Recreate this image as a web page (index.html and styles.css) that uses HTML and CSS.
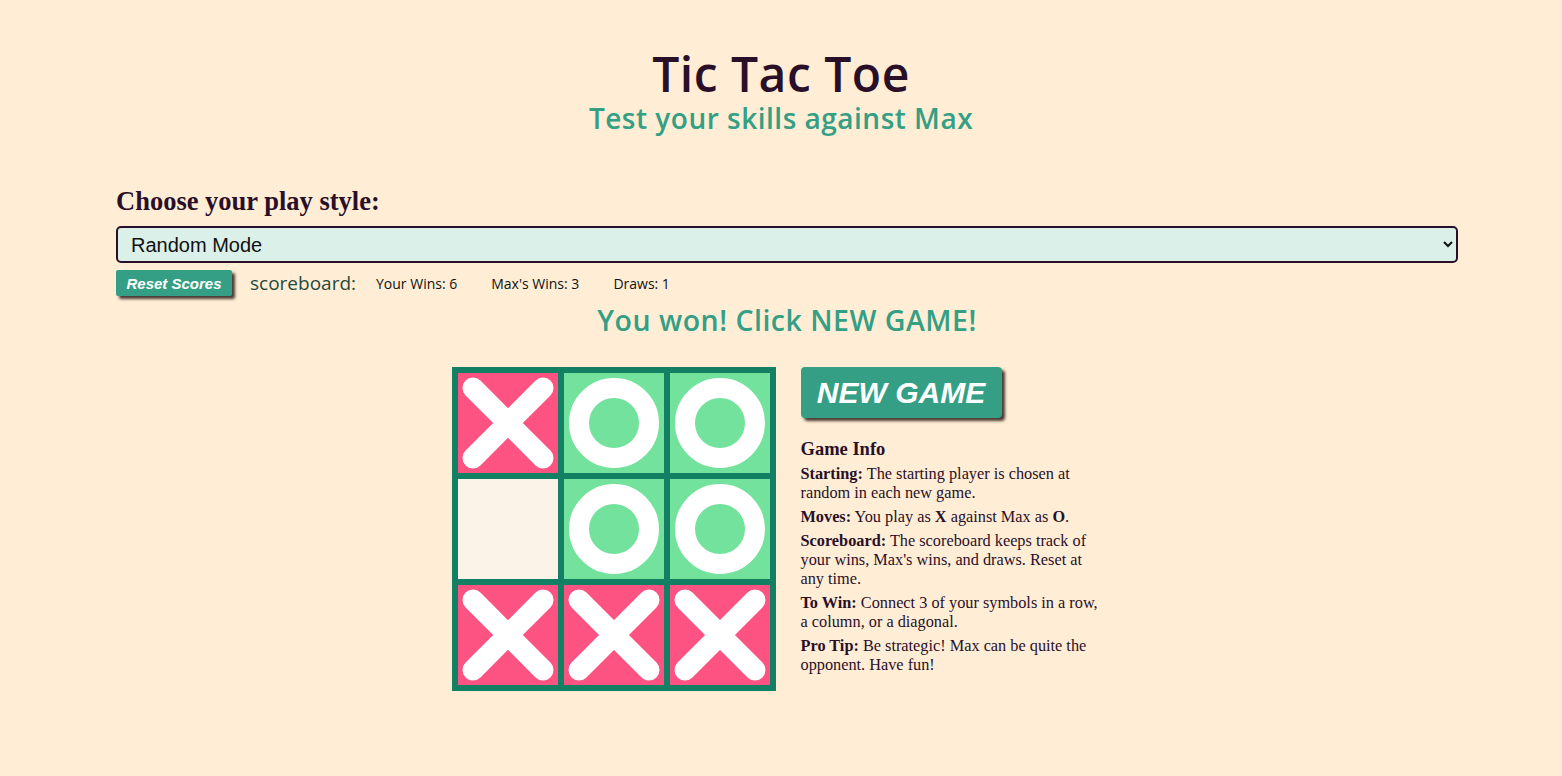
FILE: index.html
```html
<!DOCTYPE html>
<html>
<head>
<meta charset="utf-8">
<link rel="stylesheet" href="styles.css">
</head>
<body>
<header class="hero">
  <h1 class="title">Tic Tac Toe</h1>
  <h2 class="subtitle">Test your skills against Max</h2>
</header>
<main class="main">
  <label class="style-label" for="mode">Choose your play style:</label>
  <select class="mode-select" id="mode">
    <option>Random Mode</option>
  </select>
  <div class="score-row">
    <button class="reset-btn">Reset Scores</button>
    <span class="score-title">scoreboard:</span>
    <span class="score">Your Wins: 6</span>
    <span class="score">Max's Wins: 3</span>
    <span class="score">Draws: 1</span>
  </div>
  <p class="status">You won! Click NEW GAME!</p>
  <div class="game">
    <div class="board">
      <div class="cell cell-x"><svg viewBox="0 0 100 100"><path d="M15 15 L85 85 M85 15 L15 85"/></svg></div>
      <div class="cell cell-o"><svg viewBox="0 0 100 100"><circle cx="50" cy="50" r="35"/></svg></div>
      <div class="cell cell-o"><svg viewBox="0 0 100 100"><circle cx="50" cy="50" r="35"/></svg></div>
      <div class="cell cell-empty"></div>
      <div class="cell cell-o"><svg viewBox="0 0 100 100"><circle cx="50" cy="50" r="35"/></svg></div>
      <div class="cell cell-o"><svg viewBox="0 0 100 100"><circle cx="50" cy="50" r="35"/></svg></div>
      <div class="cell cell-x"><svg viewBox="0 0 100 100"><path d="M15 15 L85 85 M85 15 L15 85"/></svg></div>
      <div class="cell cell-x"><svg viewBox="0 0 100 100"><path d="M15 15 L85 85 M85 15 L15 85"/></svg></div>
      <div class="cell cell-x"><svg viewBox="0 0 100 100"><path d="M15 15 L85 85 M85 15 L15 85"/></svg></div>
    </div>
    <aside class="side">
      <button class="new-btn">NEW GAME</button>
      <h3 class="info-title">Game Info</h3>
      <p class="info"><b>Starting:</b> The starting player is chosen at random in each new game.</p>
      <p class="info"><b>Moves:</b> You play as <b>X</b> against Max as <b>O</b>.</p>
      <p class="info"><b>Scoreboard:</b> The scoreboard keeps track of your wins, Max's wins, and draws. Reset at any time.</p>
      <p class="info"><b>To Win:</b> Connect 3 of your symbols in a row, a column, or a diagonal.</p>
      <p class="info"><b>Pro Tip:</b> Be strategic! Max can be quite the opponent. Have fun!</p>
    </aside>
  </div>
</main>
</body>
</html>
```

FILE: styles.css
```css
html, body {
  margin: 0;
  padding: 0;
  background: #ffeed5;
}
body {
  font-family: "Liberation Serif", serif;
  color: #2a0f28;
}
.hero {
  text-align: center;
  padding-top: 46px;
}
.title {
  margin: 0;
  font-family: "Open Sans", sans-serif;
  font-weight: 600;
  font-size: 48px;
  line-height: 56px;
  color: #2a0f28;
  letter-spacing: 0.5px;
}
.subtitle {
  margin: 0;
  font-family: "Open Sans", sans-serif;
  font-weight: 600;
  font-size: 28px;
  line-height: 32px;
  letter-spacing: 0.5px;
  color: #349f84;
}
.main {
  margin: 52px 104px 0 116px;
  display: flex;
  flex-direction: column;
}
.style-label {
  font-family: "Liberation Serif", serif;
  font-weight: bold;
  font-size: 26.5px;
  line-height: 30px;
  color: #2a0f28;
}
.mode-select {
  margin-top: 10px;
  height: 37px;
  border: 2px solid #2a0f28;
  border-radius: 5px;
  background: #dcf0ea;
  font-family: "Liberation Sans", sans-serif;
  font-size: 20px;
  color: #111;
  padding: 0 9px;
}
.score-row {
  display: flex;
  align-items: center;
  margin-top: 6px;
  height: 28px;
}
.reset-btn {
  background: #349f84;
  color: #fff;
  border: none;
  border-radius: 2px;
  font-family: "Liberation Sans", sans-serif;
  font-weight: bold;
  font-style: italic;
  font-size: 15px;
  width: 116px;
  height: 26px;
  padding: 0;
  box-shadow: 3px 3px 3px #4b3a33;
}
.score-title {
  font-family: "Open Sans", sans-serif;
  font-size: 19px;
  color: #1f4a3c;
  margin-left: 18px;
  margin-right: 20px;
}
.score {
  font-family: "Open Sans", sans-serif;
  font-size: 14px;
  color: #111;
  margin-right: 34px;
}
.status {
  margin: 6px 0 0;
  text-align: center;
  font-family: "Open Sans", sans-serif;
  font-weight: 600;
  font-size: 28.5px;
  line-height: 34px;
  letter-spacing: 0.5px;
  color: #349f84;
}
.game {
  display: flex;
  justify-content: center;
  gap: 25px;
  margin-top: 30px;
}
.board {
  display: grid;
  grid-template-columns: repeat(3, 100px);
  grid-template-rows: repeat(3, 100px);
  gap: 6px;
  padding: 6px;
  background: #137f63;
  width: max-content;
  height: max-content;
}
.cell {
  width: 100px;
  height: 100px;
}
.cell svg {
  display: block;
  width: 100px;
  height: 100px;
}
.cell-x {
  background: #fd5383;
}
.cell-x path {
  stroke: #fff;
  stroke-width: 21;
  stroke-linecap: round;
  fill: none;
}
.cell-o {
  background: #72e29c;
}
.cell-o circle {
  stroke: #fff;
  stroke-width: 20;
  fill: none;
}
.cell-empty {
  background: #fbf3e8;
}
.side {
  width: 301px;
  padding-right: 21px;
  display: flex;
  flex-direction: column;
  align-items: flex-start;
}
.new-btn {
  background: #349f84;
  color: #fff;
  border: none;
  border-radius: 4px;
  font-family: "Liberation Sans", sans-serif;
  font-weight: bold;
  font-style: italic;
  font-size: 30px;
  width: 201px;
  height: 51px;
  padding: 0;
  box-shadow: 3px 3px 3px #4b3a33;
}
.info-title {
  margin: 20px 0 4px;
  font-size: 18.5px;
  line-height: 22px;
}
.info {
  margin: 0 0 5px;
  font-size: 16.3px;
  line-height: 19px;
}
```
